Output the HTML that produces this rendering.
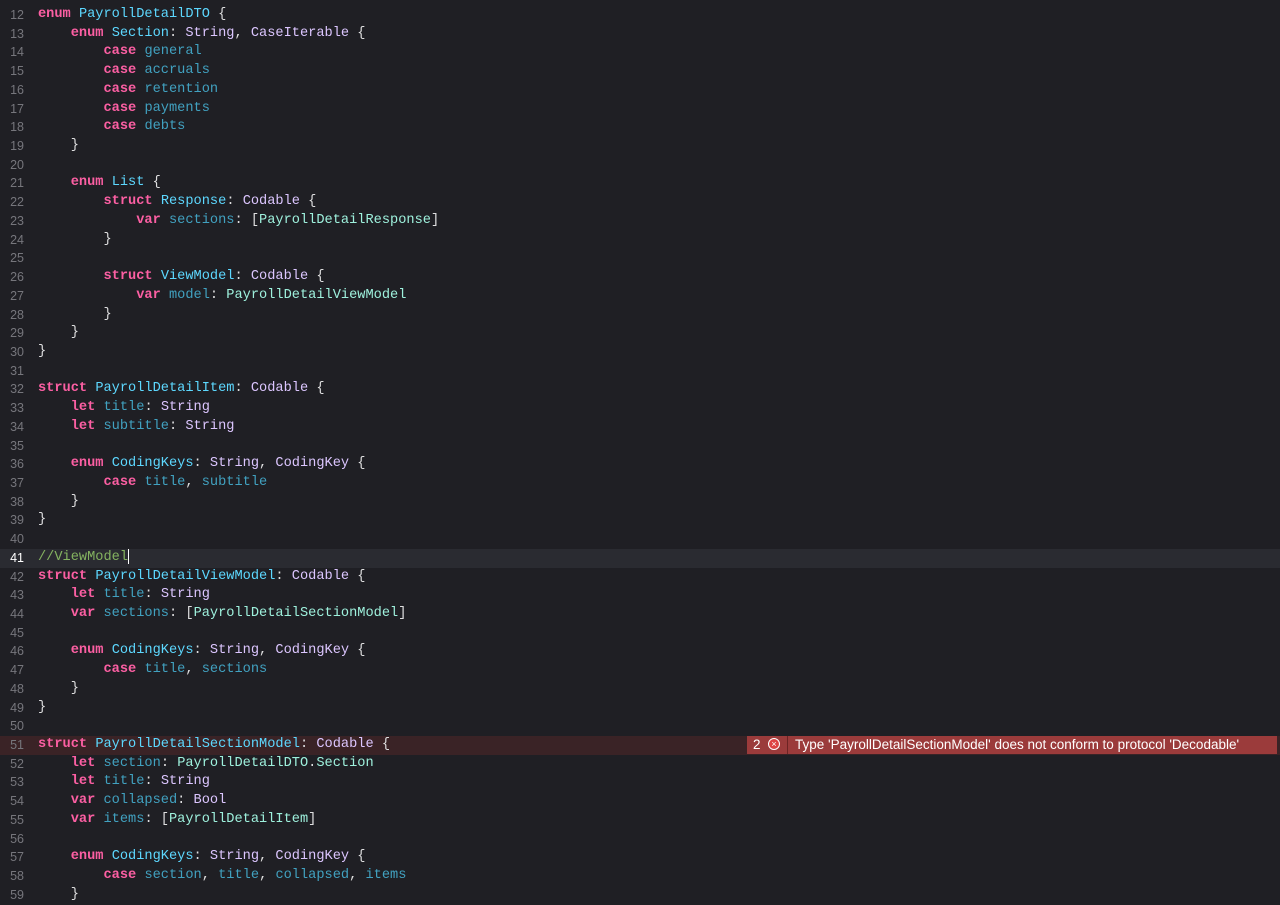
<!DOCTYPE html>
<html><head><meta charset="utf-8"><style>
body{margin:0;background:#1f1f24;width:1280px;height:903px;overflow:hidden;position:relative;font-family:"Liberation Mono",monospace;font-size:13.65px;color:#dfdfe0}
.wrap{position:absolute;top:6px;left:0;right:0}
.l{height:18.72px;line-height:18.72px;position:relative;white-space:pre}
.n{position:absolute;left:0;width:24px;text-align:right;color:#76767c;font-family:"Liberation Sans",sans-serif;font-size:12.5px}
.c{position:absolute;left:38px}
.cur{background:#2a2b31}.cur .n{color:#fff}
.err{background:#3a2326}
.k{color:#fc5fa3;font-weight:bold}.d{color:#5dd8ff}.t{color:#dcc6ff}.p{color:#9ef1dd}.i{color:#41a1c0}.cm{color:#84b360}
.badge{position:absolute;left:747px;top:0;width:530px;height:18px;background:#9b3b3b;font-family:"Liberation Sans",sans-serif;font-size:13.5px;color:#fff;line-height:18px}
.badge .num{position:absolute;left:6px}
.badge .ic{position:absolute;left:21px;top:2px;width:10px;height:10px;border:1.5px solid #fff;border-radius:50%;background:#d44;font-size:9px;line-height:10px;text-align:center}
.badge .sep{position:absolute;left:40px;top:0;width:1px;height:18px;background:#6d2424}
.badge .msg{position:absolute;left:48px}
.caret{display:inline-block;width:1px;height:15px;background:#fff;vertical-align:middle}
</style></head><body><div class="wrap">
<div class="l"><span class="n">12</span><span class="c"><span class="k">enum</span> <span class="d">PayrollDetailDTO</span> {</span></div>
<div class="l"><span class="n">13</span><span class="c">    <span class="k">enum</span> <span class="d">Section</span>: <span class="t">String</span>, <span class="t">CaseIterable</span> {</span></div>
<div class="l"><span class="n">14</span><span class="c">        <span class="k">case</span> <span class="i">general</span></span></div>
<div class="l"><span class="n">15</span><span class="c">        <span class="k">case</span> <span class="i">accruals</span></span></div>
<div class="l"><span class="n">16</span><span class="c">        <span class="k">case</span> <span class="i">retention</span></span></div>
<div class="l"><span class="n">17</span><span class="c">        <span class="k">case</span> <span class="i">payments</span></span></div>
<div class="l"><span class="n">18</span><span class="c">        <span class="k">case</span> <span class="i">debts</span></span></div>
<div class="l"><span class="n">19</span><span class="c">    }</span></div>
<div class="l"><span class="n">20</span><span class="c"></span></div>
<div class="l"><span class="n">21</span><span class="c">    <span class="k">enum</span> <span class="d">List</span> {</span></div>
<div class="l"><span class="n">22</span><span class="c">        <span class="k">struct</span> <span class="d">Response</span>: <span class="t">Codable</span> {</span></div>
<div class="l"><span class="n">23</span><span class="c">            <span class="k">var</span> <span class="i">sections</span>: [<span class="p">PayrollDetailResponse</span>]</span></div>
<div class="l"><span class="n">24</span><span class="c">        }</span></div>
<div class="l"><span class="n">25</span><span class="c"></span></div>
<div class="l"><span class="n">26</span><span class="c">        <span class="k">struct</span> <span class="d">ViewModel</span>: <span class="t">Codable</span> {</span></div>
<div class="l"><span class="n">27</span><span class="c">            <span class="k">var</span> <span class="i">model</span>: <span class="p">PayrollDetailViewModel</span></span></div>
<div class="l"><span class="n">28</span><span class="c">        }</span></div>
<div class="l"><span class="n">29</span><span class="c">    }</span></div>
<div class="l"><span class="n">30</span><span class="c">}</span></div>
<div class="l"><span class="n">31</span><span class="c"></span></div>
<div class="l"><span class="n">32</span><span class="c"><span class="k">struct</span> <span class="d">PayrollDetailItem</span>: <span class="t">Codable</span> {</span></div>
<div class="l"><span class="n">33</span><span class="c">    <span class="k">let</span> <span class="i">title</span>: <span class="t">String</span></span></div>
<div class="l"><span class="n">34</span><span class="c">    <span class="k">let</span> <span class="i">subtitle</span>: <span class="t">String</span></span></div>
<div class="l"><span class="n">35</span><span class="c"></span></div>
<div class="l"><span class="n">36</span><span class="c">    <span class="k">enum</span> <span class="d">CodingKeys</span>: <span class="t">String</span>, <span class="t">CodingKey</span> {</span></div>
<div class="l"><span class="n">37</span><span class="c">        <span class="k">case</span> <span class="i">title</span>, <span class="i">subtitle</span></span></div>
<div class="l"><span class="n">38</span><span class="c">    }</span></div>
<div class="l"><span class="n">39</span><span class="c">}</span></div>
<div class="l"><span class="n">40</span><span class="c"></span></div>
<div class="l cur"><span class="n">41</span><span class="c"><span class="cm">//ViewModel</span><span class="caret"></span></span></div>
<div class="l"><span class="n">42</span><span class="c"><span class="k">struct</span> <span class="d">PayrollDetailViewModel</span>: <span class="t">Codable</span> {</span></div>
<div class="l"><span class="n">43</span><span class="c">    <span class="k">let</span> <span class="i">title</span>: <span class="t">String</span></span></div>
<div class="l"><span class="n">44</span><span class="c">    <span class="k">var</span> <span class="i">sections</span>: [<span class="p">PayrollDetailSectionModel</span>]</span></div>
<div class="l"><span class="n">45</span><span class="c"></span></div>
<div class="l"><span class="n">46</span><span class="c">    <span class="k">enum</span> <span class="d">CodingKeys</span>: <span class="t">String</span>, <span class="t">CodingKey</span> {</span></div>
<div class="l"><span class="n">47</span><span class="c">        <span class="k">case</span> <span class="i">title</span>, <span class="i">sections</span></span></div>
<div class="l"><span class="n">48</span><span class="c">    }</span></div>
<div class="l"><span class="n">49</span><span class="c">}</span></div>
<div class="l"><span class="n">50</span><span class="c"></span></div>
<div class="l err"><span class="n">51</span><span class="c"><span class="k">struct</span> <span class="d">PayrollDetailSectionModel</span>: <span class="t">Codable</span> {</span><div class="badge"><span class="num">2</span><span class="ic">×</span><span class="sep"></span><span class="msg">Type 'PayrollDetailSectionModel' does not conform to protocol 'Decodable'</span></div></div>
<div class="l"><span class="n">52</span><span class="c">    <span class="k">let</span> <span class="i">section</span>: <span class="p">PayrollDetailDTO</span>.<span class="p">Section</span></span></div>
<div class="l"><span class="n">53</span><span class="c">    <span class="k">let</span> <span class="i">title</span>: <span class="t">String</span></span></div>
<div class="l"><span class="n">54</span><span class="c">    <span class="k">var</span> <span class="i">collapsed</span>: <span class="t">Bool</span></span></div>
<div class="l"><span class="n">55</span><span class="c">    <span class="k">var</span> <span class="i">items</span>: [<span class="p">PayrollDetailItem</span>]</span></div>
<div class="l"><span class="n">56</span><span class="c"></span></div>
<div class="l"><span class="n">57</span><span class="c">    <span class="k">enum</span> <span class="d">CodingKeys</span>: <span class="t">String</span>, <span class="t">CodingKey</span> {</span></div>
<div class="l"><span class="n">58</span><span class="c">        <span class="k">case</span> <span class="i">section</span>, <span class="i">title</span>, <span class="i">collapsed</span>, <span class="i">items</span></span></div>
<div class="l"><span class="n">59</span><span class="c">    }</span></div>
</div></body></html>
